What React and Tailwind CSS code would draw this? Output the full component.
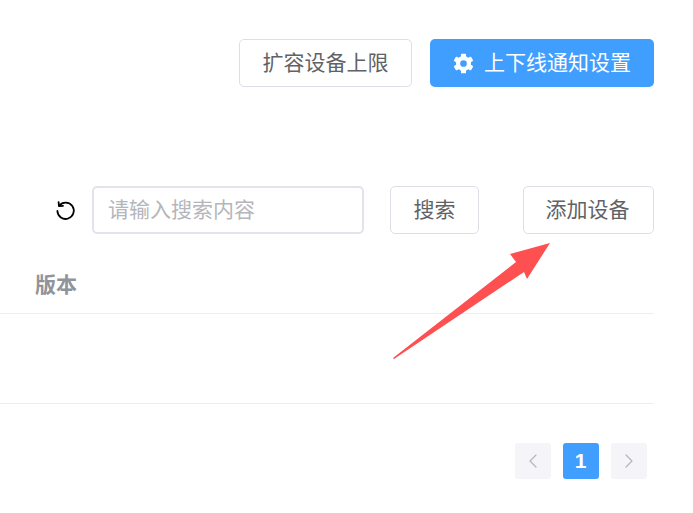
import { ChevronLeft, ChevronRight } from 'lucide-react'

const FONT = "font-['Liberation_Sans','Noto_Sans_CJK_SC',sans-serif]"

function OutlineButton({ className, children }) {
  return (
    <button className={`h-12 rounded-[5px] border border-[#dcdfe6] bg-white text-[21px] text-[#606266] ${className}`}>
      {children}
    </button>
  )
}

function PageArrow({ children }) {
  return (
    <button className="flex h-9 w-9 items-center justify-center rounded-[3px] bg-[#f4f4f9] text-[#b4b6bb]">
      {children}
    </button>
  )
}

function GearIcon() {
  return (
    <svg className="h-[21px] w-[21px]" viewBox="0 0 20 20" fill="none">
      <circle cx="10" cy="10" r="5.2" stroke="currentColor" strokeWidth="4" />
      <g fill="currentColor">
        <rect x="7.6" y="0.6" width="4.8" height="4" rx="0.8" />
        <rect x="7.6" y="0.6" width="4.8" height="4" rx="0.8" transform="rotate(60 10 10)" />
        <rect x="7.6" y="0.6" width="4.8" height="4" rx="0.8" transform="rotate(120 10 10)" />
        <rect x="7.6" y="0.6" width="4.8" height="4" rx="0.8" transform="rotate(180 10 10)" />
        <rect x="7.6" y="0.6" width="4.8" height="4" rx="0.8" transform="rotate(240 10 10)" />
        <rect x="7.6" y="0.6" width="4.8" height="4" rx="0.8" transform="rotate(300 10 10)" />
      </g>
    </svg>
  )
}

export default function App() {
  return (
    <div className={`relative h-[513px] w-[693px] overflow-hidden bg-white pr-[39px] pt-[39px] ${FONT}`}>
      {/* Top actions */}
      <div className="flex justify-end gap-[18px]">
        <OutlineButton className="w-[173px]">扩容设备上限</OutlineButton>
        <button className="flex h-12 w-[224px] items-center justify-center gap-[10px] rounded-[5px] bg-[#409eff] text-[21px] text-white">
          <GearIcon />
          上下线通知设置
        </button>
      </div>

      {/* Search row */}
      <div className="mt-[99px] flex items-center">
        <svg className="ml-[55px] h-[21px] w-[21px] text-black" viewBox="0 0 21 21" fill="none" stroke="currentColor" strokeWidth="1.8" strokeLinecap="round" strokeLinejoin="round">
          <path d="M4.2 5.6A8.2 8.2 0 1 1 2.4 11" />
          <path d="M3.6 2.2 4 6.2 8 5.8" />
        </svg>
        <input
          placeholder="请输入搜索内容"
          className="ml-[16px] h-12 w-[272px] rounded-[5px] border-2 border-[#e2e4eb] bg-white px-[14px] pb-[1px] text-[21px] text-[#606266] outline-none placeholder:text-[#b4b6bb]"
        />
        <OutlineButton className="ml-[26px] w-[89px]">搜索</OutlineButton>
        <OutlineButton className="ml-[44px] w-[131px] pr-[2px]">添加设备</OutlineButton>
      </div>

      {/* Table */}
      <div className="mt-[27px] flex h-[53px] items-center border-b border-[#ebeef5] pb-[5px] pl-[35px] text-[21px] font-bold text-[#909399]">
        版本
      </div>
      <div className="h-[90px] border-b border-[#ebeef5]" />

      {/* Pagination */}
      <div className="mr-[7px] mt-[39px] flex justify-end gap-3">
        <PageArrow><ChevronLeft size={24} strokeWidth={1.2} /></PageArrow>
        <button className="flex h-9 w-9 items-center justify-center rounded-[3px] bg-[#409eff] pr-[1px] text-[21px] font-bold text-white">1</button>
        <PageArrow><ChevronRight size={24} strokeWidth={1.2} /></PageArrow>
      </div>

      {/* Annotation arrow */}
      <svg className="pointer-events-none absolute left-0 top-0" width="693" height="513" viewBox="0 0 693 513">
        <polygon points="393,358 516,262 510,254 550,243 527,279 524,272 394,359" fill="#fe5050" />
      </svg>
    </div>
  )
}
